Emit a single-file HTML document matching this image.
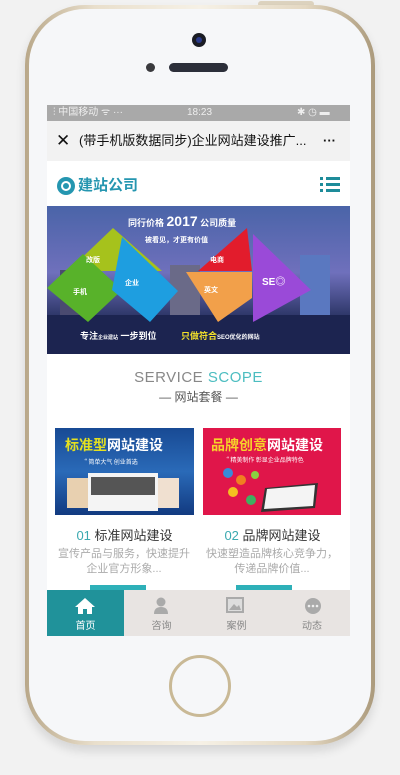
<!DOCTYPE html>
<html><head><meta charset="utf-8"><style>
*{margin:0;padding:0;box-sizing:border-box}
body{width:400px;height:775px;background:#f2f2f2;position:relative;overflow:hidden;font-family:"Liberation Sans","Noto Sans CJK SC",sans-serif}
.abs{position:absolute}
.phone{left:25px;top:5px;width:350px;height:740px;border-radius:60px;background:linear-gradient(90deg,#b9a88a,#e9dfcc 20%,#f6f1e6 50%,#e4d8c2 80%,#ab9a7c);box-shadow:0 6px 10px rgba(0,0,0,.12)}
.body{left:29px;top:9px;width:342px;height:732px;border-radius:56px;background:#f6f7f9}
.scr{left:47px;top:105px;width:303px;height:531px;background:#fff;overflow:hidden}
.c{text-align:center}
</style></head><body>
<div class="abs" style="left:258px;top:1px;width:56px;height:6px;background:#ddd3bf;border-radius:3px"></div>
<div class="abs phone"></div>
<div class="abs body"></div>
<div class="abs" style="left:192px;top:33px;width:14px;height:14px;border-radius:50%;background:#1a1c24"><div class="abs" style="left:4px;top:4px;width:6px;height:6px;border-radius:50%;background:#2a3a8a"></div></div>
<div class="abs" style="left:146px;top:63px;width:9px;height:9px;border-radius:50%;background:#3a3a3e"></div>
<div class="abs" style="left:169px;top:63px;width:59px;height:9px;border-radius:5px;background:#2c2f3a"></div>
<div class="abs" style="left:169px;top:655px;width:62px;height:62px;border-radius:50%;border:3px solid #c9b996;background:#f6f7f9"></div>
<div class="abs scr">
 <div class="abs" style="left:0;top:0;width:303px;height:16px;background:#a9a9a9;color:#eee;font-size:10px;line-height:16px">
  <span class="abs" style="left:6px">⫶ 中国移动 ᯤ ···</span><span class="abs" style="left:140px">18:23</span><span class="abs" style="left:250px">✱ ◷ ▬</span></div>
 <div class="abs" style="left:0;top:16px;width:303px;height:40px;background:#f2f2f2;font-size:13px;line-height:40px;color:#111;white-space:nowrap">
  <span class="abs" style="left:9px;font-size:17px">✕</span><span class="abs" style="left:32px">(带手机版数据同步)企业网站建设推广...</span><span class="abs" style="left:276px;font-weight:bold">···</span></div>
 <div class="abs" style="left:10px;top:72px;width:18px;height:18px;border-radius:50%;background:#2596b0"><div class="abs" style="left:4px;top:4px;width:10px;height:10px;border-radius:50%;border:2px solid #fff"></div></div>
 <div class="abs" style="left:31px;top:70px;font-size:15px;font-weight:bold;color:#2596b0;line-height:22px">建站公司</div>
 <div class="abs" style="left:273px;top:72px;width:20px;height:16px">
  <div class="abs" style="left:0;top:0;width:3px;height:3px;background:#1e8c9a"></div><div class="abs" style="left:6px;top:0;width:14px;height:3px;background:#1e8c9a"></div>
  <div class="abs" style="left:0;top:6px;width:3px;height:3px;background:#1e8c9a"></div><div class="abs" style="left:6px;top:6px;width:14px;height:3px;background:#1e8c9a"></div>
  <div class="abs" style="left:0;top:12px;width:3px;height:3px;background:#1e8c9a"></div><div class="abs" style="left:6px;top:12px;width:14px;height:3px;background:#1e8c9a"></div></div>
 <svg class="abs" style="left:0;top:101px" width="303" height="148" viewBox="47 206 303 148">
  <defs><linearGradient id="g" x1="0" y1="0" x2="0" y2="1"><stop offset="0" stop-color="#4a64a8"/><stop offset=".45" stop-color="#6f70bc"/><stop offset=".75" stop-color="#2c3566"/><stop offset="1" stop-color="#1a2448"/></linearGradient></defs>
  <rect x="47" y="206" width="303" height="148" fill="url(#g)"/>
  <rect x="170" y="265" width="30" height="55" fill="#6a6a88"/><rect x="300" y="255" width="30" height="70" fill="#5a78c0"/><rect x="60" y="270" width="20" height="50" fill="#4a4a70"/>
  <rect x="47" y="315" width="303" height="39" fill="#1c2450"/>
  <polygon points="113,228 162,271 68,271" fill="#a6c21c"/>
  <polygon points="47,288 83,254 122,290 88,322" fill="#58b22a"/>
  <polygon points="122,237 178,291 150,322 112,290" fill="#1e9ee0"/>
  <polygon points="247,228 252,271 198,271" fill="#e21c2c"/>
  <polygon points="186,272 252,272 252,298 218,322" fill="#f2a04a"/>
  <polygon points="253,234 311,290 253,322" fill="#9a4ad8"/>
  <g fill="#fff" font-family="Liberation Sans,Noto Sans CJK SC,sans-serif" font-weight="bold">
  <text x="128" y="226" font-size="9">同行价格 <tspan font-size="14">2017</tspan> 公司质量</text>
  <text x="145" y="242" font-size="7">被看见，才更有价值</text>
  <text x="86" y="262" font-size="7">改版</text><text x="73" y="294" font-size="7">手机</text>
  <text x="125" y="285" font-size="7">企业</text><text x="210" y="262" font-size="7">电商</text>
  <text x="204" y="292" font-size="7">英文</text><text x="262" y="285" font-size="10">SE◎</text>
  <text x="80" y="339" font-size="9">专注<tspan font-size="5">企业建站</tspan> 一步到位</text>
  <text x="181" y="339" font-size="9" fill="#f4e22a">只做符合<tspan fill="#fff" font-size="6">SEO优化的网站</tspan></text></g>
 </svg>
 <div class="abs c" style="left:0;top:264px;width:303px;font-size:15px;color:#888;letter-spacing:.5px">SERVICE <span style="color:#4cbdc0">SCOPE</span></div>
 <div class="abs c" style="left:0;top:283px;width:303px;font-size:12px;color:#555">— 网站套餐 —</div>
 <svg class="abs" style="left:8px;top:323px" width="139" height="87"><defs><linearGradient id="b" x1="0" y1="0" x2="0" y2="1"><stop offset="0" stop-color="#184a94"/><stop offset=".5" stop-color="#2a6ab8"/><stop offset="1" stop-color="#123a80"/></linearGradient></defs><rect width="139" height="87" fill="url(#b)"/>
  <text x="10" y="22" font-size="14" font-weight="bold" font-family="Noto Sans CJK SC,sans-serif" fill="#e4e020">标准型<tspan fill="#fff">网站建设</tspan></text>
  <text x="26" y="36" font-size="6" fill="#fff" font-family="Noto Sans CJK SC,sans-serif">“ 简单大气 创业首选</text>
  <rect x="12" y="50" width="22" height="30" fill="#e8d0b0"/><rect x="100" y="50" width="24" height="30" fill="#f0e0d0"/><rect x="33" y="45" width="70" height="38" fill="#f4f4f4"/><rect x="36" y="49" width="64" height="18" fill="#555"/></svg>
 <svg class="abs" style="left:156px;top:323px" width="138" height="87"><rect width="138" height="87" fill="#e0164a"/>
  <text x="8" y="22" font-size="14" font-weight="bold" font-family="Noto Sans CJK SC,sans-serif" fill="#f6d22a">品牌创意<tspan fill="#fff">网站建设</tspan></text>
  <text x="20" y="34" font-size="6" fill="#fff" font-family="Noto Sans CJK SC,sans-serif">“ 精美制作 彰显企业品牌特色</text>
  <polygon points="62,60 115,55 112,80 58,84" fill="#333"/><polygon points="64,61 112,57 110,78 61,81" fill="#f4f4f4"/>
  <circle cx="25" cy="45" r="5" fill="#3a8ad8"/><circle cx="38" cy="52" r="5" fill="#f08020"/><circle cx="30" cy="64" r="5" fill="#f4c020"/><circle cx="48" cy="72" r="5" fill="#40b060"/><circle cx="52" cy="47" r="4" fill="#8ad040"/></svg>
 <div class="abs c" style="left:8px;top:420px;width:139px;font-size:13px;color:#333"><span style="color:#3aa9b0">01</span> 标准网站建设</div>
 <div class="abs c" style="left:156px;top:420px;width:139px;font-size:13px;color:#333"><span style="color:#3aa9b0">02</span> 品牌网站建设</div>
 <div class="abs c" style="left:6px;top:442px;width:142px;font-size:11px;line-height:15px;color:#aaa">宣传产品与服务，快速提升企业官方形象...</div>
 <div class="abs c" style="left:154px;top:442px;width:142px;font-size:11px;line-height:15px;color:#aaa">快速塑造品牌核心竞争力，传递品牌价值...</div>
 <div class="abs" style="left:43px;top:480px;width:56px;height:8px;background:#2eb0b8"></div>
 <div class="abs" style="left:189px;top:480px;width:56px;height:8px;background:#2eb0b8"></div>
 <div class="abs" style="left:0;top:485px;width:303px;height:46px;background:#e8e4e2"></div>
 <div class="abs" style="left:0;top:485px;width:77px;height:46px;background:#20929a"></div>
 <svg class="abs" style="left:27px;top:492px" width="22" height="18"><polygon points="11,1 21,10 18,10 18,17 13,17 13,12 9,12 9,17 4,17 4,10 1,10" fill="#fff"/></svg>
 <svg class="abs" style="left:106px;top:492px" width="16" height="18"><circle cx="8" cy="5" r="4.5" fill="#aaa"/><path d="M1 17 Q1 10 8 10 Q15 10 15 17Z" fill="#aaa"/></svg>
 <svg class="abs" style="left:179px;top:492px" width="18" height="16"><rect x="0" y="0" width="18" height="16" fill="#aaa"/><rect x="2" y="2" width="14" height="12" fill="#ddd"/><polygon points="3,13 8,7 11,10 13,8 15,13" fill="#aaa"/></svg>
 <svg class="abs" style="left:257px;top:493px" width="18" height="16"><circle cx="9" cy="8" r="8" fill="#aaa"/><circle cx="5" cy="8" r="1.3" fill="#eee"/><circle cx="9" cy="8" r="1.3" fill="#eee"/><circle cx="13" cy="8" r="1.3" fill="#eee"/></svg>
 <div class="abs c" style="left:0;top:512px;width:77px;font-size:10px;color:#fff">首页</div>
 <div class="abs c" style="left:77px;top:512px;width:75px;font-size:10px;color:#888">咨询</div>
 <div class="abs c" style="left:152px;top:512px;width:75px;font-size:10px;color:#888">案例</div>
 <div class="abs c" style="left:227px;top:512px;width:76px;font-size:10px;color:#888">动态</div>
</div>
</body></html>
